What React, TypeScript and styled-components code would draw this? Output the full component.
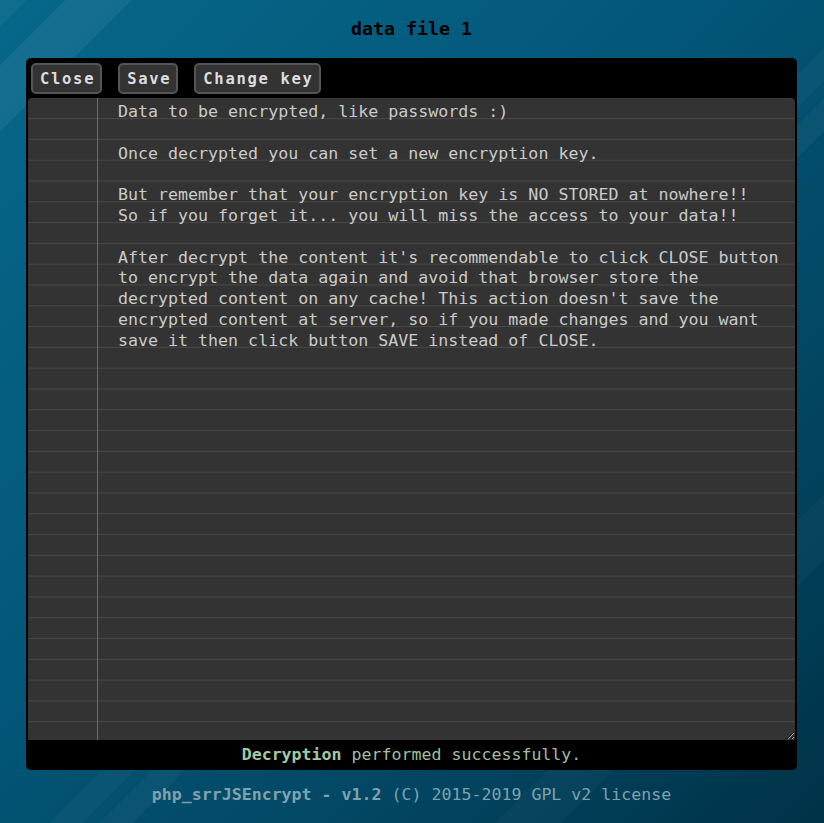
import styled, { createGlobalStyle } from "styled-components";

const GlobalStyle = createGlobalStyle`
  html, body {
    margin: 0;
    padding: 0;
  }

  body {
    font-family: "DejaVu Sans Mono", "Liberation Mono", monospace;
  }

  * {
    box-sizing: border-box;
  }
`;

const mono = `"DejaVu Sans Mono", "Liberation Mono", monospace`;

const Page = styled.div`
  min-height: 100vh;
  padding: 18px 27px 0 26px;
  background-color: #03506b;
  background-image: linear-gradient(
      135deg,
      rgba(255, 255, 255, 0.04) 0%,
      rgba(255, 255, 255, 0.04) 1.6%,
      transparent 1.6%,
      transparent 4%,
      rgba(255, 255, 255, 0.06) 4%,
      rgba(255, 255, 255, 0.06) 8%,
      transparent 8%,
      transparent 53%,
      rgba(255, 255, 255, 0.03) 53%,
      rgba(255, 255, 255, 0.03) 55%,
      transparent 55%,
      transparent 56%,
      rgba(255, 255, 255, 0.03) 56%,
      rgba(255, 255, 255, 0.03) 58%,
      transparent 58%,
      transparent 80%,
      rgba(255, 255, 255, 0.025) 80%,
      rgba(255, 255, 255, 0.025) 84%,
      transparent 84%
    ),
    linear-gradient(135deg, #07678a 0%, #03587a 40%, #024460 75%, #003247 100%);
`;

const Title = styled.h1`
  margin: 0;
  height: 22px;
  line-height: 22px;
  text-align: center;
  font-family: ${mono};
  font-size: 18.3px;
  font-weight: 700;
  color: #000;
`;

const Panel = styled.div`
  width: 771px;
  margin-top: 18px;
  background: #000;
  border-radius: 5px;
  padding: 0 2px;
  display: flex;
  flex-direction: column;
`;

const Toolbar = styled.div`
  display: flex;
  gap: 16px;
  padding: 5px 3px 4px;
`;

const Button = styled.button.attrs({ type: "button" })`
  height: 31px;
  padding: 0 5px 0 7px;
  background: #333;
  color: #ddd;
  border: 2px solid #555;
  border-radius: 5px;
  font-family: ${mono};
  font-size: 15.5px;
  font-weight: 700;
  letter-spacing: 1.7px;
  cursor: pointer;
`;

const Editor = styled.textarea`
  display: block;
  width: 100%;
  height: 642px;
  margin: 0;
  padding: 4px 8px 0 90px;
  border: none;
  border-radius: 4px 4px 0 0;
  outline: none;
  resize: vertical;
  overflow: hidden;
  white-space: pre;
  color: #cbcbcb;
  font-family: ${mono};
  font-size: 16.64px;
  line-height: 20.8px;
  background-color: #333;
  background-image: linear-gradient(
      to right,
      transparent 69px,
      #50738f 69px,
      #50738f 70px,
      transparent 70px
    ),
    linear-gradient(to bottom, transparent 20px, #484848 20px, #484848 21px, transparent 21px);
  background-size: 100% 100%, 100% 20.8px;
  background-repeat: no-repeat, repeat-y;
  background-position: 0 0, 0 0.3px;
`;

const Status = styled.div`
  height: 30px;
  line-height: 30px;
  text-align: center;
  font-family: ${mono};
  font-size: 16.6px;
  color: #a3bd9f;

  b {
    color: #a4c9a0;
  }
`;

const Footer = styled.div`
  margin-top: 15px;
  line-height: 20px;
  text-align: center;
  font-family: ${mono};
  font-size: 16.6px;
  color: #7ea3ae;

  b {
    color: #7fa3ad;
  }
`;

const content = `Data to be encrypted, like passwords :)

Once decrypted you can set a new encryption key.

But remember that your encryption key is NO STORED at nowhere!!
So if you forget it... you will miss the access to your data!!

After decrypt the content it's recommendable to click CLOSE button
to encrypt the data again and avoid that browser store the
decrypted content on any cache! This action doesn't save the
encrypted content at server, so if you made changes and you want
save it then click button SAVE instead of CLOSE.`;

function App() {
  return (
    <Page>
      <GlobalStyle />
      <Title>data file 1</Title>

      <Panel>
        <Toolbar>
          <Button>Close</Button>
          <Button>Save</Button>
          <Button>Change key</Button>
        </Toolbar>

        <Editor defaultValue={content} spellCheck={false} />

        <Status>
          <b>Decryption</b> performed successfully.
        </Status>
      </Panel>

      <Footer>
        <b>php_srrJSEncrypt - v1.2</b> (C) 2015-2019 GPL v2 license
      </Footer>
    </Page>
  );
}

export default App;
